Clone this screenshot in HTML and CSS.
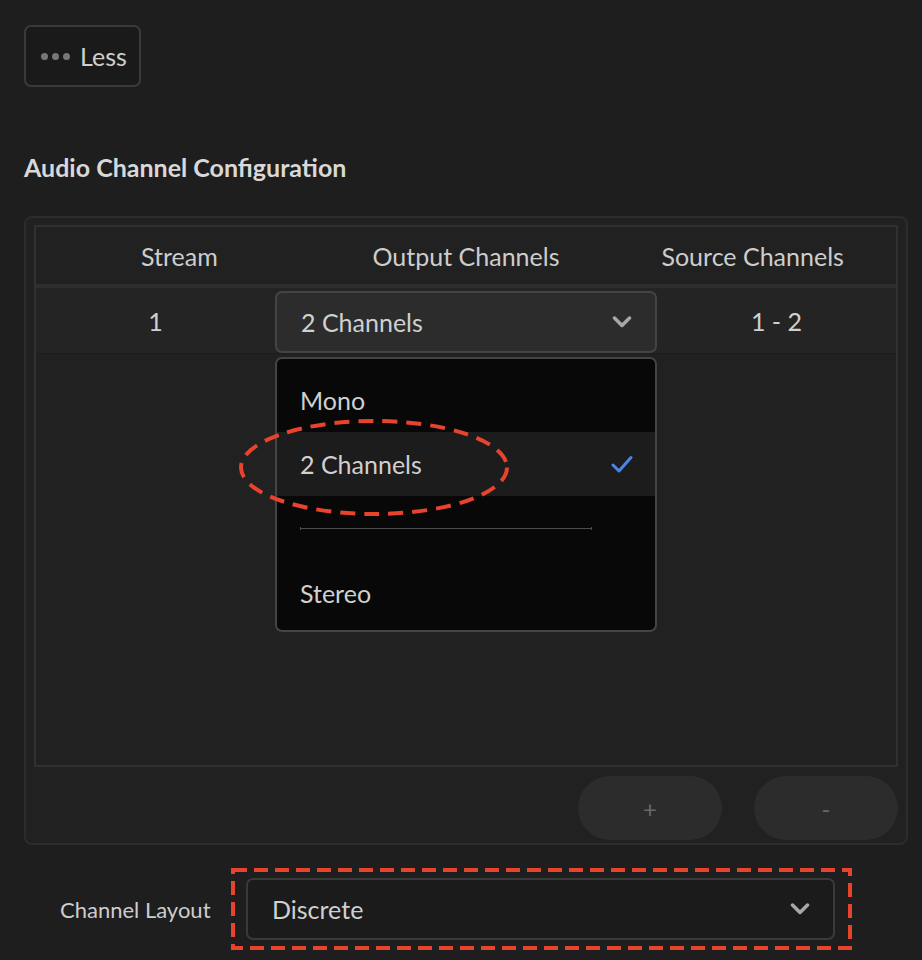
FILE: index.html
```html
<!DOCTYPE html>
<html lang="en">
<head>
    <meta charset="UTF-8">
    <meta name="viewport" content="width=device-width, initial-scale=1.0">
    <title>Audio Channel Configuration</title>
    <link rel="stylesheet" href="styles.css">
</head>
<body>
    <div class="page">
        <button class="less-btn" type="button">
            <span class="dots"><i></i><i></i><i></i></span>Less
        </button>

        <h2 class="section-title">Audio Channel Configuration</h2>

        <section class="panel">
            <div class="streams">
                <div class="streams-head">
                    <div>Stream</div>
                    <div>Output Channels</div>
                    <div>Source Channels</div>
                </div>
                <div class="stream-row">
                    <div class="cell">1</div>
                    <div class="picker-wrap">
                        <div class="picker picker-raised">
                            <span>2 Channels</span>
                            <svg class="chevron" viewBox="0 0 20 12"><polyline points="2.5,2 10,9.5 17.5,2"/></svg>
                        </div>
                        <ul class="menu">
                            <li>Mono</li>
                            <li class="selected">
                                <span>2 Channels</span>
                                <svg class="check" viewBox="0 0 22 19"><polyline points="2,10 8,16 20,2.5"/></svg>
                            </li>
                            <li class="sep"><span></span></li>
                            <li>Stereo</li>
                        </ul>
                        <svg class="mark-ellipse" viewBox="0 0 272 99">
                            <ellipse cx="136" cy="49.5" rx="133" ry="46.5"/>
                        </svg>
                    </div>
                    <div class="cell">1 - 2</div>
                </div>
            </div>
            <div class="panel-actions">
                <button class="pill" type="button">+</button>
                <button class="pill" type="button">-</button>
            </div>
        </section>

        <div class="layout-row">
            <label class="layout-label">Channel Layout</label>
            <div class="mark-box">
                <svg class="mark-rect" viewBox="0 0 621 82"><rect x="2" y="2" width="617" height="78"/></svg>
                <div class="picker">
                    <span>Discrete</span>
                    <svg class="chevron" viewBox="0 0 20 12"><polyline points="2.5,2 10,9.5 17.5,2"/></svg>
                </div>
            </div>
        </div>
    </div>
</body>
</html>
```

FILE: styles.css
```css
* {
    margin: 0;
    padding: 0;
    box-sizing: border-box;
}
body {
    background-color: #1e1e1e;
    color: #d0d0d0;
    font-family: Lato, "Open Sans", sans-serif;
    font-size: 25px;
}
.page {
    padding: 25px 14px 0 24px;
}
button {
    font-family: inherit;
    cursor: pointer;
}
.less-btn {
    display: flex;
    align-items: center;
    width: 117px;
    height: 62px;
    padding: 0 0 0 15px;
    background-color: #1a1a1a;
    border: 2px solid #3a3a3a;
    border-radius: 7px;
    color: #cfcfcf;
    font-size: 25px;
}
.dots {
    display: flex;
    gap: 4px;
    margin-right: 10px;
}
.dots i {
    width: 7px;
    height: 7px;
    border-radius: 50%;
    background-color: #777777;
}
.section-title {
    margin: 65px 0 34px;
    font-size: 25px;
    line-height: 30px;
    font-weight: bold;
    color: #d8d8d8;
}
.panel {
    width: 884px;
    height: 629px;
    padding: 7px 8px 0;
    background-color: #212121;
    border: 2px solid #2c2c2c;
    border-radius: 8px;
}
.streams {
    height: 542px;
    border: 2px solid #303030;
    background-color: #212121;
}
.streams-head {
    display: grid;
    grid-template-columns: repeat(3, 1fr);
    align-items: center;
    height: 61px;
    border-bottom: 4px solid #2e2e2e;
    text-align: center;
    color: #cdcdcd;
}
.stream-row {
    display: grid;
    grid-template-columns: 239px 382px 1fr;
    height: 66px;
    background-color: #242424;
    border-bottom: 1px solid #1d1d1d;
}
.stream-row .cell {
    display: flex;
    align-items: center;
    justify-content: center;
}
.picker-wrap {
    position: relative;
    padding-top: 3px;
}
.picker {
    display: flex;
    align-items: center;
    justify-content: space-between;
    height: 62px;
    padding: 0 23px 0 24px;
    background-color: #1b1b1b;
    border: 2px solid #3a3a3a;
    border-radius: 7px;
}
.picker-raised {
    background-color: #2c2c2c;
    border-color: #444444;
}
.chevron {
    width: 20px;
    height: 12px;
    fill: none;
    stroke: #a8a8a8;
    stroke-width: 3.5;
    stroke-linecap: round;
    stroke-linejoin: round;
}
.menu {
    position: absolute;
    top: 69px;
    left: 0;
    width: 382px;
    height: 275px;
    padding: 9px 0 7px;
    list-style: none;
    background-color: #080808;
    border: 2px solid #444444;
    border-radius: 7px;
}
.menu li {
    display: flex;
    align-items: center;
    justify-content: space-between;
    height: 64px;
    padding: 0 22px 0 23px;
}
.menu li.selected {
    background-color: #1c1c1c;
}
.menu li.sep {
    height: 65px;
    padding-right: 63px;
}
.sep span {
    position: relative;
    flex: 1;
    height: 1px;
    background-color: #4e4e4e;
}
.sep span::before, .sep span::after {
    content: '';
    position: absolute;
    top: -1px;
    width: 1px;
    height: 3px;
    background-color: #4e4e4e;
}
.sep span::before {
    left: 0;
}
.sep span::after {
    right: 0;
}
.check {
    width: 22px;
    height: 19px;
    fill: none;
    stroke: #4a86e8;
    stroke-width: 3;
    stroke-linecap: round;
    stroke-linejoin: round;
}
.mark-ellipse {
    position: absolute;
    left: -37px;
    top: 130px;
    width: 272px;
    height: 99px;
    overflow: visible;
    fill: none;
    stroke: #e8432d;
    stroke-width: 4;
    stroke-dasharray: 15 9;
}
.panel-actions {
    display: flex;
    justify-content: flex-end;
    gap: 32px;
    margin-top: 9px;
}
.pill {
    width: 144px;
    height: 64px;
    border: none;
    border-radius: 32px;
    background-color: #2c2c2c;
    color: #686868;
    font-size: 24px;
}
.layout-row {
    display: flex;
    align-items: center;
    margin-top: 23px;
    padding-left: 36px;
}
.layout-label {
    width: 171px;
    padding-right: 23px;
    text-align: right;
    font-size: 22px;
    color: #cdcdcd;
    white-space: nowrap;
}
.mark-box {
    position: relative;
    width: 621px;
    height: 82px;
    padding: 10px 17px 9px 15px;
}
.mark-rect {
    position: absolute;
    top: 0;
    left: 0;
    width: 621px;
    height: 82px;
    fill: none;
    stroke: #e8432d;
    stroke-width: 4;
    stroke-dasharray: 14 7;
}
```
